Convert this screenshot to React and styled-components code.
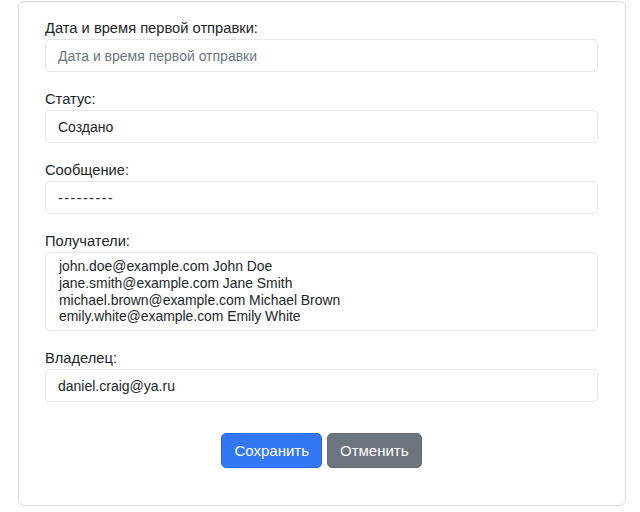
import React from 'react'
import styled, { createGlobalStyle } from 'styled-components'

const GlobalStyle = createGlobalStyle`
  body {
    margin: 0;
    background: #fff;
    font-family: "Liberation Sans", Arial, sans-serif;
    color: #212529;
  }
`

const Page = styled.div`
  padding: 1px 14px 6px 18px;
`

const Card = styled.form`
  border: 1px solid #dcdcdc;
  border-radius: 6px;
  box-shadow: 0 0 2px rgba(0, 0, 0, 0.05);
  padding: 15px 27px 37px 26px;
  background: #fff;
`

const Group = styled.div`
  display: flex;
  flex-direction: column;
  margin-bottom: ${p => (p.$last ? '0' : '16px')};
`

const Label = styled.label`
  font-size: 14.7px;
  line-height: 22px;
  color: #212529;
`

const Input = styled.input`
  box-sizing: border-box;
  height: 33px;
  width: 100%;
  padding: 6px 12px;
  font-family: inherit;
  font-size: 14px;
  line-height: 19px;
  letter-spacing: ${p => (p.$spaced ? '1.6px' : 'normal')};
  color: #212529;
  border: 1px solid #e4e6e8;
  border-radius: 5px;
  outline: none;

  &::placeholder {
    color: #6c757d;
  }
`

const TextArea = styled.textarea`
  box-sizing: border-box;
  height: 79px;
  width: 100%;
  padding: 5px 12px 4px 13px;
  font-family: inherit;
  font-size: 13.9px;
  line-height: 16.8px;
  color: #212529;
  border: 1px solid #e4e6e8;
  border-radius: 5px;
  outline: none;
  resize: none;
  overflow: hidden;
`

const Actions = styled.div`
  display: flex;
  justify-content: center;
  gap: 5px;
  margin-top: 31px;
`

const Button = styled.button`
  height: 35px;
  padding: 0 12px;
  font-family: inherit;
  font-size: 15px;
  color: #fff;
  border-radius: 5px;
  border: 1px solid ${p => (p.$variant === 'primary' ? '#276ae8' : '#646c74')};
  background: ${p => (p.$variant === 'primary' ? '#3278f5' : '#6c757d')};
  cursor: pointer;
`

const recipients = [
  'john.doe@example.com John Doe',
  'jane.smith@example.com Jane Smith',
  'michael.brown@example.com Michael Brown',
  'emily.white@example.com Emily White',
].join('\n')

const App = () => {
  return (
    <Page>
      <GlobalStyle />
      <Card onSubmit={e => e.preventDefault()}>
        <Group>
          <Label>Дата и время первой отправки:</Label>
          <Input placeholder="Дата и время первой отправки" />
        </Group>
        <Group>
          <Label>Статус:</Label>
          <Input defaultValue="Создано" />
        </Group>
        <Group>
          <Label>Сообщение:</Label>
          <Input defaultValue="---------" $spaced />
        </Group>
        <Group>
          <Label>Получатели:</Label>
          <TextArea defaultValue={recipients} />
        </Group>
        <Group $last>
          <Label>Владелец:</Label>
          <Input defaultValue="daniel.craig@ya.ru" />
        </Group>
        <Actions>
          <Button type="submit" $variant="primary">Сохранить</Button>
          <Button type="button" $variant="secondary">Отменить</Button>
        </Actions>
      </Card>
    </Page>
  )
}

export default App
